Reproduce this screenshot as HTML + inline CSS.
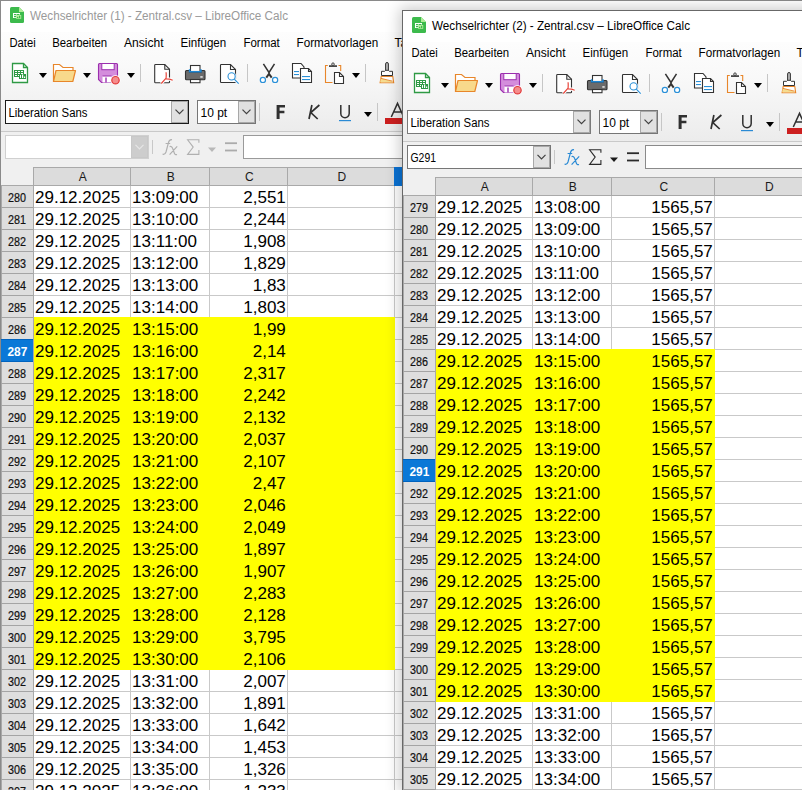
<!DOCTYPE html>
<html><head><meta charset="utf-8"><style>
html,body{margin:0;padding:0;width:802px;height:790px;overflow:hidden;background:#fff}
.w{position:absolute}
#w1{left:0;top:0;width:820px;height:800px}
#w2{left:402px;top:10px;width:460px;height:782px;box-shadow:0 0 14px 2px rgba(0,0,0,0.22)}
svg{display:block}
</style></head><body>
<div class="w" id="w1"><svg width="820" height="800" font-family="Liberation Sans"><rect x="0" y="0" width="820" height="800" fill="#fff"/><defs><linearGradient id="tbg" x1="0" y1="0" x2="0" y2="1"><stop offset="0" stop-color="#fdfdfd"/><stop offset="0.35" stop-color="#f9f9f9"/><stop offset="1" stop-color="#ececec"/></linearGradient></defs><rect x="1" y="32" width="820" height="99" fill="url(#tbg)"/><rect x="1" y="131" width="819" height="1" fill="#c9c9c9"/><rect x="1" y="132" width="820" height="660" fill="#f0f0f0"/><rect x="0" y="0" width="820" height="1" fill="#8a8a8a"/><rect x="0" y="0" width="1" height="800" fill="#8a8a8a"/><path d="M11.5 7h7.5l5 5v9.5a1.5 1.5 0 0 1-1.5 1.5h-11a1.5 1.5 0 0 1-1.5-1.5v-13a1.5 1.5 0 0 1 1.5-1.5z" fill="#3cba4c"/><path d="M19 7l5 5h-5z" fill="#b0ee98"/><rect x="13" y="13" width="7" height="5" fill="#fff"/><rect x="14" y="14" width="2.5" height="1.2" fill="#3cba4c"/><rect x="17" y="14" width="2.5" height="1.2" fill="#3cba4c"/><rect x="14" y="16" width="2.5" height="1.2" fill="#3cba4c"/><rect x="16.2" y="15" width="5" height="3.8" fill="#b6ee9e"/><rect x="17" y="16.8" width="1.3" height="1.3" fill="#3cba4c"/><rect x="19" y="15.8" width="1.3" height="2.3" fill="#3cba4c"/><text x="30" y="20" font-size="12" fill="#9a9a9a" textLength="258" lengthAdjust="spacingAndGlyphs">Wechselrichter (1) - Zentral.csv – LibreOffice Calc</text><text x="9.5" y="47" font-size="12" fill="#000" textLength="26.2" lengthAdjust="spacingAndGlyphs">Datei</text><text x="52.2" y="47" font-size="12" fill="#000" textLength="55" lengthAdjust="spacingAndGlyphs">Bearbeiten</text><text x="124" y="47" font-size="12" fill="#000" textLength="39.6" lengthAdjust="spacingAndGlyphs">Ansicht</text><text x="180.6" y="47" font-size="12" fill="#000" textLength="45.6" lengthAdjust="spacingAndGlyphs">Einfügen</text><text x="243.4" y="47" font-size="12" fill="#000" textLength="36.4" lengthAdjust="spacingAndGlyphs">Format</text><text x="296.5" y="47" font-size="12" fill="#000" textLength="81.8" lengthAdjust="spacingAndGlyphs">Formatvorlagen</text><text x="394.5" y="47" font-size="12" fill="#000" textLength="38" lengthAdjust="spacingAndGlyphs">Tabelle</text><path d="M12.5 63.5h11l4 4v15h-15z" fill="#fff" stroke="#2f9a45" stroke-width="1.3"/><path d="M23.5 63.5v4h4" fill="none" stroke="#2f9a45" stroke-width="1.3"/><rect x="14" y="70" width="10" height="7" fill="#2f9a45"/><rect x="15" y="71" width="2" height="1" fill="#fff"/><rect x="15" y="73" width="2" height="1" fill="#fff"/><rect x="15" y="75" width="2" height="1" fill="#fff"/><rect x="18" y="71" width="2" height="1" fill="#fff"/><rect x="18" y="73" width="2" height="1" fill="#fff"/><rect x="18" y="75" width="2" height="1" fill="#fff"/><rect x="21" y="71" width="2" height="1" fill="#fff"/><rect x="21" y="73" width="2" height="1" fill="#fff"/><rect x="21" y="75" width="2" height="1" fill="#fff"/><rect x="19" y="74" width="7" height="5" fill="#2f9a45"/><rect x="20" y="75" width="1" height="3" fill="#fff"/><rect x="22" y="74.5" width="1.2" height="3.5" fill="#fff"/><rect x="24" y="76.5" width="1.2" height="1.5" fill="#fff"/><path d="M39 73h8l-4.0 5z" fill="#000"/><path d="M53.5 81.5v-17h6l3.5 3h10v3" fill="#fff" stroke="#e8862a" stroke-width="1.2"/><path d="M56 70.5h19.5l-2.7 11h-19.3z" fill="#f8d98b" stroke="#e8862a" stroke-width="1.2" stroke-linejoin="round"/><path d="M83 73h8l-4.0 5z" fill="#000"/><path d="M99.5 63.5h17a1 1 0 0 1 1 1v18h-16l-3-3v-15a1 1 0 0 1 1-1z" fill="#d48ddc" stroke="#9b2fae" stroke-width="1.1"/><rect x="101.8" y="63.5" width="12.4" height="6.2" fill="#fff" stroke="#9b2fae" stroke-width="1"/><rect x="102.5" y="76" width="9" height="6.5" fill="#fff"/><path d="M102.5 76h9" stroke="#9b2fae" stroke-width="1"/><rect x="105.3" y="77.5" width="1.4" height="5" fill="#9b2fae"/><circle cx="115.5" cy="80.2" r="5" fill="#fff"/><circle cx="115.5" cy="80.2" r="3.7" fill="#f58c8c" stroke="#e03a3a" stroke-width="1.2"/><path d="M127 73h8l-4.0 5z" fill="#000"/><rect x="140" y="64" width="1" height="18" fill="#c6c6c6"/><path d="M155.5 64.5h9.3l4.7 4.7v12.8a.8.8 0 0 1-.8.8h-13.2a.8.8 0 0 1-.8-.8v-16.7a.8.8 0 0 1 .8-.8z" fill="#fff" stroke="#333" stroke-width="1.1"/><path d="M164.8 64.5v4.8h4.7" fill="none" stroke="#333" stroke-width="1.1"/><path d="M166.1 72.2c.2 2 .2 4 0 5.9l-4.8 5.4M165.4 78.9c2.6-.2 5 .3 7.3 1.3M166.1 78.1l-.9 1" fill="none" stroke="#fff" stroke-width="3.2"/><path d="M166.1 72.2c.2 2 .2 4 0 5.9l-4.8 5.4M165.4 78.9c2.6-.2 5 .3 7.3 1.3M166.1 78.1l-.9 1" fill="none" stroke="#e8443a" stroke-width="1.2"/><rect x="190.5" y="65.5" width="9.5" height="6" fill="#fff" stroke="#333" stroke-width="1.1"/><path d="M186.5 70.5h3v1.8h11.5v-1.8h3a1 1 0 0 1 1 1v7.2a1 1 0 0 1-1 1h-17.5a1 1 0 0 1-1-1v-7.2a1 1 0 0 1 1-1z" fill="#6b6b6b" stroke="#333" stroke-width="1.1"/><path d="M189.6 69.3v2.4h11.3v-2.4" fill="none" stroke="#1e88d6" stroke-width="1.6"/><rect x="190.5" y="79.5" width="9.5" height="3.2" fill="#fff" stroke="#333" stroke-width="1.1"/><rect x="200.3" y="76.3" width="2.4" height="1.3" fill="#fff"/><path d="M221.3 64.5h9.2l5 5v13h-14.2a.8.8 0 0 1-.8-.8v-16.4a.8.8 0 0 1 .8-.8z" fill="#fff" stroke="#333" stroke-width="1.1"/><path d="M230.5 64.5v5h5" fill="none" stroke="#333" stroke-width="1.1"/><circle cx="231.6" cy="76.4" r="4.6" fill="#fff"/><path d="M234.6 79.4l4.2 4.3" stroke="#fff" stroke-width="3"/><circle cx="231.6" cy="76.4" r="3.6" fill="none" stroke="#2a90d8" stroke-width="1.1"/><path d="M234.3 79.1l4.4 4.5" stroke="#2a90d8" stroke-width="1.2"/><rect x="247" y="64" width="1" height="18" fill="#c6c6c6"/><path d="M263.4 63.9l5.6 8.6l5.5-8.6" fill="none" stroke="#333" stroke-width="1.5"/><path d="M266.3 77.6l2.7-3.6l2.7 3.6" fill="none" stroke="#333" stroke-width="2"/><circle cx="262.9" cy="79.9" r="2.6" fill="#fff" stroke="#2a90d8" stroke-width="1.2"/><circle cx="275.1" cy="79.9" r="2.6" fill="#fff" stroke="#2a90d8" stroke-width="1.2"/><path d="M292.5 63.5h8.5l3 3.5v11h-11.5z" fill="#fff" stroke="#333" stroke-width="1.1"/><rect x="294" y="71" width="5" height="1.1" fill="#2a90d8"/><rect x="294" y="74" width="5" height="1.1" fill="#2a90d8"/><path d="M300.5 68.5h8l3 3v11h-11z" fill="#fff" stroke="#333" stroke-width="1.1"/><path d="M308.5 68.5v3h3" fill="none" stroke="#333" stroke-width="1.1"/><rect x="302" y="76" width="8" height="1.1" fill="#2a90d8"/><rect x="302" y="79" width="8" height="1.1" fill="#2a90d8"/><path d="M327.8 65.5h-2.3v17h7M338.5 65.5h2.2v5.5" fill="none" stroke="#e8862a" stroke-width="1.1"/><rect x="329" y="65.3" width="8" height="1.6" fill="#333"/><circle cx="333" cy="64.2" r="1.3" fill="#eee" stroke="#333" stroke-width="0.9"/><path d="M334.5 72.5h5l4 4v7h-9z" fill="#fff" stroke="#333" stroke-width="1.1"/><path d="M339.5 72.5v4h4" fill="none" stroke="#333" stroke-width="1.1"/><path d="M352 73h8l-4.0 5z" fill="#000"/><rect x="365" y="64" width="1" height="18" fill="#c6c6c6"/><path d="M385.6 70.5v-6.6a1.4 1.4 0 0 1 2.8 0v6.6" fill="#b8b8b8" stroke="#333" stroke-width="1"/><path d="M381.5 75.5v-4.2h3.2l1-1h2.6l1 1h3.2v4.2z" fill="#fff" stroke="#333" stroke-width="1"/><path d="M381.2 76.5h11.6l.9 6.3h-13.6z" fill="#fff" stroke="#e8862a" stroke-width="1.1"/><path d="M380.8 78.3l11.8 3.2v.8h-12.4z" fill="#f5dc90"/><path d="M381 78.4l11.6 2.8" stroke="#e8862a" stroke-width="0.9"/><rect x="5" y="100" width="184" height="24" fill="#1a1a1a"/><rect x="6" y="101" width="182" height="22" fill="#fff"/><rect x="171" y="101" width="17" height="22" fill="#a8a8a8"/><rect x="172" y="102" width="15" height="20" fill="#e1e1e1"/><path d="M175.5 109.6l4 4l4-4" fill="none" stroke="#404040" stroke-width="1.2"/><text x="8.5" y="117" font-size="12" fill="#000" textLength="79" lengthAdjust="spacingAndGlyphs">Liberation Sans</text><rect x="197" y="100" width="59" height="24" fill="#767676"/><rect x="198" y="101" width="57" height="22" fill="#fff"/><rect x="238" y="101" width="17" height="22" fill="#a8a8a8"/><rect x="239" y="102" width="15" height="20" fill="#e1e1e1"/><path d="M242.5 109.6l4 4l4-4" fill="none" stroke="#404040" stroke-width="1.2"/><text x="200.5" y="117" font-size="12" fill="#000">10 pt</text><rect x="259" y="103" width="1" height="18" fill="#c6c6c6"/><path d="M276.6 105h8.4v2.5h-5.4v3.3h4.8v2.4h-4.8v5.8h-3z" fill="#303030"/><path d="M311.9 105l-2.9 14M319.4 105l-8.6 7.6l6.9 6.4" fill="none" stroke="#303030" stroke-width="1.7"/><path d="M340.8 105v8.5a4.2 4.2 0 0 0 8.4 0v-8.5" fill="none" stroke="#303030" stroke-width="1.5"/><rect x="339" y="120" width="12" height="1.2" fill="#2a8ad4"/><path d="M364 112h8l-4.0 5z" fill="#000"/><rect x="377" y="103" width="1" height="18" fill="#c6c6c6"/><path d="M391.3 117l6.2-13.6l6.2 13.6M393.6 112h7.8" fill="none" stroke="#303030" stroke-width="1.5"/><rect x="385" y="118" width="40" height="6" fill="#cc1f1f"/><rect x="5" y="135" width="144" height="24" fill="#d0d0d0"/><rect x="6" y="136" width="142" height="22" fill="#fff"/><rect x="131" y="136" width="17" height="22" fill="#c8c8c8"/><rect x="132" y="137" width="15" height="20" fill="#cdcdcd"/><path d="M135.5 144.8l4 4l4-4" fill="none" stroke="#e6e6e6" stroke-width="1.2"/><rect x="152" y="140" width="1" height="14" fill="#c8c8c8"/><path d="M162.6 154.2c1.6.4 2.8-.3 3.4-2.2l2.4-9.2c.6-2.3 1.8-3.4 3.6-3M165.6 143.5h4.6" fill="none" stroke="#b0b0b0" stroke-width="1.2"/><path d="M169.6 146.6c1.6-.6 2.4.2 3 1.8l1.8 4.8c.5 1.4 1.3 1.8 2.6 1.3M177.2 146.4l-7.6 8.3" fill="none" stroke="#b0b0b0" stroke-width="1.2"/><path d="M198.9 142.8v-3h-11.3l5.6 7.3l-5.6 7.3h11.3v-4.3" fill="none" stroke="#b0b0b0" stroke-width="1.1"/><path d="M208 147.5h8l-4.0 4.5z" fill="#b8b8b8"/><rect x="225" y="142.3" width="12" height="1.8" fill="#ababab"/><rect x="225" y="149.6" width="12" height="1.8" fill="#ababab"/><rect x="243" y="135" width="600" height="24" fill="#9a9a9a"/><rect x="244" y="136" width="600" height="22" fill="#fff"/><rect x="34" y="168" width="830" height="17" fill="#dcdcdc"/><rect x="33" y="167" width="797" height="1" fill="#a9a9a9"/><rect x="1" y="185" width="829" height="1" fill="#a9a9a9"/><text x="82.8" y="181" font-size="12" fill="#1a1a1a" text-anchor="middle">A</text><rect x="130" y="168" width="1" height="17" fill="#a9a9a9"/><text x="170.8" y="181" font-size="12" fill="#1a1a1a" text-anchor="middle">B</text><rect x="209" y="168" width="1" height="17" fill="#a9a9a9"/><text x="249.3" y="181" font-size="12" fill="#1a1a1a" text-anchor="middle">C</text><rect x="287" y="168" width="1" height="17" fill="#a9a9a9"/><text x="341.8" y="181" font-size="12" fill="#1a1a1a" text-anchor="middle">D</text><rect x="394" y="168" width="1" height="17" fill="#a9a9a9"/><text x="449.3" y="181" font-size="12" fill="#1a1a1a" text-anchor="middle">E</text><rect x="502" y="168" width="1" height="17" fill="#a9a9a9"/><rect x="394" y="167" width="108" height="19" fill="#0a72d4"/><rect x="33" y="167" width="1" height="633" fill="#a9a9a9"/><rect x="1" y="186" width="1" height="614" fill="#a8a8a8"/><rect x="2" y="186" width="31" height="21" fill="#dedede"/><rect x="1" y="207" width="32" height="1" fill="#a4a4a4"/><text x="17" y="202" font-size="12" fill="#111" text-anchor="middle" textLength="18" lengthAdjust="spacingAndGlyphs" stroke="#111" stroke-width="0.2">280</text><rect x="2" y="208" width="31" height="21" fill="#dedede"/><rect x="1" y="229" width="32" height="1" fill="#a4a4a4"/><text x="17" y="224" font-size="12" fill="#111" text-anchor="middle" textLength="18" lengthAdjust="spacingAndGlyphs" stroke="#111" stroke-width="0.2">281</text><rect x="2" y="230" width="31" height="21" fill="#dedede"/><rect x="1" y="251" width="32" height="1" fill="#a4a4a4"/><text x="17" y="246" font-size="12" fill="#111" text-anchor="middle" textLength="18" lengthAdjust="spacingAndGlyphs" stroke="#111" stroke-width="0.2">282</text><rect x="2" y="252" width="31" height="21" fill="#dedede"/><rect x="1" y="273" width="32" height="1" fill="#a4a4a4"/><text x="17" y="268" font-size="12" fill="#111" text-anchor="middle" textLength="18" lengthAdjust="spacingAndGlyphs" stroke="#111" stroke-width="0.2">283</text><rect x="2" y="274" width="31" height="21" fill="#dedede"/><rect x="1" y="295" width="32" height="1" fill="#a4a4a4"/><text x="17" y="290" font-size="12" fill="#111" text-anchor="middle" textLength="18" lengthAdjust="spacingAndGlyphs" stroke="#111" stroke-width="0.2">284</text><rect x="2" y="296" width="31" height="21" fill="#dedede"/><rect x="1" y="317" width="32" height="1" fill="#a4a4a4"/><text x="17" y="312" font-size="12" fill="#111" text-anchor="middle" textLength="18" lengthAdjust="spacingAndGlyphs" stroke="#111" stroke-width="0.2">285</text><rect x="2" y="318" width="31" height="21" fill="#dedede"/><rect x="1" y="339" width="32" height="1" fill="#a4a4a4"/><text x="17" y="334" font-size="12" fill="#111" text-anchor="middle" textLength="18" lengthAdjust="spacingAndGlyphs" stroke="#111" stroke-width="0.2">286</text><rect x="1" y="339" width="32" height="23" fill="#0063be"/><rect x="1" y="340" width="32" height="21" fill="#0a78d7"/><text x="17.4" y="356" font-size="12" fill="#fff" text-anchor="middle" textLength="19.8" lengthAdjust="spacingAndGlyphs" font-weight="bold">287</text><rect x="2" y="362" width="31" height="21" fill="#dedede"/><rect x="1" y="383" width="32" height="1" fill="#a4a4a4"/><text x="17" y="378" font-size="12" fill="#111" text-anchor="middle" textLength="18" lengthAdjust="spacingAndGlyphs" stroke="#111" stroke-width="0.2">288</text><rect x="2" y="384" width="31" height="21" fill="#dedede"/><rect x="1" y="405" width="32" height="1" fill="#a4a4a4"/><text x="17" y="400" font-size="12" fill="#111" text-anchor="middle" textLength="18" lengthAdjust="spacingAndGlyphs" stroke="#111" stroke-width="0.2">289</text><rect x="2" y="406" width="31" height="21" fill="#dedede"/><rect x="1" y="427" width="32" height="1" fill="#a4a4a4"/><text x="17" y="422" font-size="12" fill="#111" text-anchor="middle" textLength="18" lengthAdjust="spacingAndGlyphs" stroke="#111" stroke-width="0.2">290</text><rect x="2" y="428" width="31" height="21" fill="#dedede"/><rect x="1" y="449" width="32" height="1" fill="#a4a4a4"/><text x="17" y="444" font-size="12" fill="#111" text-anchor="middle" textLength="18" lengthAdjust="spacingAndGlyphs" stroke="#111" stroke-width="0.2">291</text><rect x="2" y="450" width="31" height="21" fill="#dedede"/><rect x="1" y="471" width="32" height="1" fill="#a4a4a4"/><text x="17" y="466" font-size="12" fill="#111" text-anchor="middle" textLength="18" lengthAdjust="spacingAndGlyphs" stroke="#111" stroke-width="0.2">292</text><rect x="2" y="472" width="31" height="21" fill="#dedede"/><rect x="1" y="493" width="32" height="1" fill="#a4a4a4"/><text x="17" y="488" font-size="12" fill="#111" text-anchor="middle" textLength="18" lengthAdjust="spacingAndGlyphs" stroke="#111" stroke-width="0.2">293</text><rect x="2" y="494" width="31" height="21" fill="#dedede"/><rect x="1" y="515" width="32" height="1" fill="#a4a4a4"/><text x="17" y="510" font-size="12" fill="#111" text-anchor="middle" textLength="18" lengthAdjust="spacingAndGlyphs" stroke="#111" stroke-width="0.2">294</text><rect x="2" y="516" width="31" height="21" fill="#dedede"/><rect x="1" y="537" width="32" height="1" fill="#a4a4a4"/><text x="17" y="532" font-size="12" fill="#111" text-anchor="middle" textLength="18" lengthAdjust="spacingAndGlyphs" stroke="#111" stroke-width="0.2">295</text><rect x="2" y="538" width="31" height="21" fill="#dedede"/><rect x="1" y="559" width="32" height="1" fill="#a4a4a4"/><text x="17" y="554" font-size="12" fill="#111" text-anchor="middle" textLength="18" lengthAdjust="spacingAndGlyphs" stroke="#111" stroke-width="0.2">296</text><rect x="2" y="560" width="31" height="21" fill="#dedede"/><rect x="1" y="581" width="32" height="1" fill="#a4a4a4"/><text x="17" y="576" font-size="12" fill="#111" text-anchor="middle" textLength="18" lengthAdjust="spacingAndGlyphs" stroke="#111" stroke-width="0.2">297</text><rect x="2" y="582" width="31" height="21" fill="#dedede"/><rect x="1" y="603" width="32" height="1" fill="#a4a4a4"/><text x="17" y="598" font-size="12" fill="#111" text-anchor="middle" textLength="18" lengthAdjust="spacingAndGlyphs" stroke="#111" stroke-width="0.2">298</text><rect x="2" y="604" width="31" height="21" fill="#dedede"/><rect x="1" y="625" width="32" height="1" fill="#a4a4a4"/><text x="17" y="620" font-size="12" fill="#111" text-anchor="middle" textLength="18" lengthAdjust="spacingAndGlyphs" stroke="#111" stroke-width="0.2">299</text><rect x="2" y="626" width="31" height="21" fill="#dedede"/><rect x="1" y="647" width="32" height="1" fill="#a4a4a4"/><text x="17" y="642" font-size="12" fill="#111" text-anchor="middle" textLength="18" lengthAdjust="spacingAndGlyphs" stroke="#111" stroke-width="0.2">300</text><rect x="2" y="648" width="31" height="21" fill="#dedede"/><rect x="1" y="669" width="32" height="1" fill="#a4a4a4"/><text x="17" y="664" font-size="12" fill="#111" text-anchor="middle" textLength="18" lengthAdjust="spacingAndGlyphs" stroke="#111" stroke-width="0.2">301</text><rect x="2" y="670" width="31" height="21" fill="#dedede"/><rect x="1" y="691" width="32" height="1" fill="#a4a4a4"/><text x="17" y="686" font-size="12" fill="#111" text-anchor="middle" textLength="18" lengthAdjust="spacingAndGlyphs" stroke="#111" stroke-width="0.2">302</text><rect x="2" y="692" width="31" height="21" fill="#dedede"/><rect x="1" y="713" width="32" height="1" fill="#a4a4a4"/><text x="17" y="708" font-size="12" fill="#111" text-anchor="middle" textLength="18" lengthAdjust="spacingAndGlyphs" stroke="#111" stroke-width="0.2">303</text><rect x="2" y="714" width="31" height="21" fill="#dedede"/><rect x="1" y="735" width="32" height="1" fill="#a4a4a4"/><text x="17" y="730" font-size="12" fill="#111" text-anchor="middle" textLength="18" lengthAdjust="spacingAndGlyphs" stroke="#111" stroke-width="0.2">304</text><rect x="2" y="736" width="31" height="21" fill="#dedede"/><rect x="1" y="757" width="32" height="1" fill="#a4a4a4"/><text x="17" y="752" font-size="12" fill="#111" text-anchor="middle" textLength="18" lengthAdjust="spacingAndGlyphs" stroke="#111" stroke-width="0.2">305</text><rect x="2" y="758" width="31" height="21" fill="#dedede"/><rect x="1" y="779" width="32" height="1" fill="#a4a4a4"/><text x="17" y="774" font-size="12" fill="#111" text-anchor="middle" textLength="18" lengthAdjust="spacingAndGlyphs" stroke="#111" stroke-width="0.2">306</text><rect x="2" y="780" width="31" height="21" fill="#dedede"/><rect x="1" y="801" width="32" height="1" fill="#a4a4a4"/><text x="17" y="796" font-size="12" fill="#111" text-anchor="middle" textLength="18" lengthAdjust="spacingAndGlyphs" stroke="#111" stroke-width="0.2">307</text><rect x="34" y="186" width="830" height="800" fill="#fff"/><rect x="34" y="207" width="796" height="1" fill="#c9c9c9"/><rect x="34" y="229" width="796" height="1" fill="#c9c9c9"/><rect x="34" y="251" width="796" height="1" fill="#c9c9c9"/><rect x="34" y="273" width="796" height="1" fill="#c9c9c9"/><rect x="34" y="295" width="796" height="1" fill="#c9c9c9"/><rect x="34" y="317" width="796" height="1" fill="#c9c9c9"/><rect x="34" y="339" width="796" height="1" fill="#c9c9c9"/><rect x="34" y="361" width="796" height="1" fill="#c9c9c9"/><rect x="34" y="383" width="796" height="1" fill="#c9c9c9"/><rect x="34" y="405" width="796" height="1" fill="#c9c9c9"/><rect x="34" y="427" width="796" height="1" fill="#c9c9c9"/><rect x="34" y="449" width="796" height="1" fill="#c9c9c9"/><rect x="34" y="471" width="796" height="1" fill="#c9c9c9"/><rect x="34" y="493" width="796" height="1" fill="#c9c9c9"/><rect x="34" y="515" width="796" height="1" fill="#c9c9c9"/><rect x="34" y="537" width="796" height="1" fill="#c9c9c9"/><rect x="34" y="559" width="796" height="1" fill="#c9c9c9"/><rect x="34" y="581" width="796" height="1" fill="#c9c9c9"/><rect x="34" y="603" width="796" height="1" fill="#c9c9c9"/><rect x="34" y="625" width="796" height="1" fill="#c9c9c9"/><rect x="34" y="647" width="796" height="1" fill="#c9c9c9"/><rect x="34" y="669" width="796" height="1" fill="#c9c9c9"/><rect x="34" y="691" width="796" height="1" fill="#c9c9c9"/><rect x="34" y="713" width="796" height="1" fill="#c9c9c9"/><rect x="34" y="735" width="796" height="1" fill="#c9c9c9"/><rect x="34" y="757" width="796" height="1" fill="#c9c9c9"/><rect x="34" y="779" width="796" height="1" fill="#c9c9c9"/><rect x="34" y="801" width="796" height="1" fill="#c9c9c9"/><rect x="130" y="186" width="1" height="614" fill="#c9c9c9"/><rect x="209" y="186" width="1" height="614" fill="#c9c9c9"/><rect x="287" y="186" width="1" height="614" fill="#c9c9c9"/><rect x="394" y="186" width="1" height="614" fill="#c9c9c9"/><rect x="502" y="186" width="1" height="614" fill="#c9c9c9"/><rect x="34" y="317" width="361" height="353" fill="#ffff00"/><text x="35.0" y="203" font-size="17" fill="#000">29.12.2025</text><text x="132.1" y="203" font-size="17" fill="#000">13:09:00</text><text x="285.8" y="203" font-size="17" fill="#000" text-anchor="end">2,551</text><text x="35.0" y="225" font-size="17" fill="#000">29.12.2025</text><text x="132.1" y="225" font-size="17" fill="#000">13:10:00</text><text x="285.8" y="225" font-size="17" fill="#000" text-anchor="end">2,244</text><text x="35.0" y="247" font-size="17" fill="#000">29.12.2025</text><text x="132.1" y="247" font-size="17" fill="#000">13:11:00</text><text x="285.8" y="247" font-size="17" fill="#000" text-anchor="end">1,908</text><text x="35.0" y="269" font-size="17" fill="#000">29.12.2025</text><text x="132.1" y="269" font-size="17" fill="#000">13:12:00</text><text x="285.8" y="269" font-size="17" fill="#000" text-anchor="end">1,829</text><text x="35.0" y="291" font-size="17" fill="#000">29.12.2025</text><text x="132.1" y="291" font-size="17" fill="#000">13:13:00</text><text x="285.8" y="291" font-size="17" fill="#000" text-anchor="end">1,83</text><text x="35.0" y="313" font-size="17" fill="#000">29.12.2025</text><text x="132.1" y="313" font-size="17" fill="#000">13:14:00</text><text x="285.8" y="313" font-size="17" fill="#000" text-anchor="end">1,803</text><text x="35.0" y="335" font-size="17" fill="#000">29.12.2025</text><text x="132.1" y="335" font-size="17" fill="#000">13:15:00</text><text x="285.8" y="335" font-size="17" fill="#000" text-anchor="end">1,99</text><text x="35.0" y="357" font-size="17" fill="#000">29.12.2025</text><text x="132.1" y="357" font-size="17" fill="#000">13:16:00</text><text x="285.8" y="357" font-size="17" fill="#000" text-anchor="end">2,14</text><text x="35.0" y="379" font-size="17" fill="#000">29.12.2025</text><text x="132.1" y="379" font-size="17" fill="#000">13:17:00</text><text x="285.8" y="379" font-size="17" fill="#000" text-anchor="end">2,317</text><text x="35.0" y="401" font-size="17" fill="#000">29.12.2025</text><text x="132.1" y="401" font-size="17" fill="#000">13:18:00</text><text x="285.8" y="401" font-size="17" fill="#000" text-anchor="end">2,242</text><text x="35.0" y="423" font-size="17" fill="#000">29.12.2025</text><text x="132.1" y="423" font-size="17" fill="#000">13:19:00</text><text x="285.8" y="423" font-size="17" fill="#000" text-anchor="end">2,132</text><text x="35.0" y="445" font-size="17" fill="#000">29.12.2025</text><text x="132.1" y="445" font-size="17" fill="#000">13:20:00</text><text x="285.8" y="445" font-size="17" fill="#000" text-anchor="end">2,037</text><text x="35.0" y="467" font-size="17" fill="#000">29.12.2025</text><text x="132.1" y="467" font-size="17" fill="#000">13:21:00</text><text x="285.8" y="467" font-size="17" fill="#000" text-anchor="end">2,107</text><text x="35.0" y="489" font-size="17" fill="#000">29.12.2025</text><text x="132.1" y="489" font-size="17" fill="#000">13:22:00</text><text x="285.8" y="489" font-size="17" fill="#000" text-anchor="end">2,47</text><text x="35.0" y="511" font-size="17" fill="#000">29.12.2025</text><text x="132.1" y="511" font-size="17" fill="#000">13:23:00</text><text x="285.8" y="511" font-size="17" fill="#000" text-anchor="end">2,046</text><text x="35.0" y="533" font-size="17" fill="#000">29.12.2025</text><text x="132.1" y="533" font-size="17" fill="#000">13:24:00</text><text x="285.8" y="533" font-size="17" fill="#000" text-anchor="end">2,049</text><text x="35.0" y="555" font-size="17" fill="#000">29.12.2025</text><text x="132.1" y="555" font-size="17" fill="#000">13:25:00</text><text x="285.8" y="555" font-size="17" fill="#000" text-anchor="end">1,897</text><text x="35.0" y="577" font-size="17" fill="#000">29.12.2025</text><text x="132.1" y="577" font-size="17" fill="#000">13:26:00</text><text x="285.8" y="577" font-size="17" fill="#000" text-anchor="end">1,907</text><text x="35.0" y="599" font-size="17" fill="#000">29.12.2025</text><text x="132.1" y="599" font-size="17" fill="#000">13:27:00</text><text x="285.8" y="599" font-size="17" fill="#000" text-anchor="end">2,283</text><text x="35.0" y="621" font-size="17" fill="#000">29.12.2025</text><text x="132.1" y="621" font-size="17" fill="#000">13:28:00</text><text x="285.8" y="621" font-size="17" fill="#000" text-anchor="end">2,128</text><text x="35.0" y="643" font-size="17" fill="#000">29.12.2025</text><text x="132.1" y="643" font-size="17" fill="#000">13:29:00</text><text x="285.8" y="643" font-size="17" fill="#000" text-anchor="end">3,795</text><text x="35.0" y="665" font-size="17" fill="#000">29.12.2025</text><text x="132.1" y="665" font-size="17" fill="#000">13:30:00</text><text x="285.8" y="665" font-size="17" fill="#000" text-anchor="end">2,106</text><text x="35.0" y="687" font-size="17" fill="#000">29.12.2025</text><text x="132.1" y="687" font-size="17" fill="#000">13:31:00</text><text x="285.8" y="687" font-size="17" fill="#000" text-anchor="end">2,007</text><text x="35.0" y="709" font-size="17" fill="#000">29.12.2025</text><text x="132.1" y="709" font-size="17" fill="#000">13:32:00</text><text x="285.8" y="709" font-size="17" fill="#000" text-anchor="end">1,891</text><text x="35.0" y="731" font-size="17" fill="#000">29.12.2025</text><text x="132.1" y="731" font-size="17" fill="#000">13:33:00</text><text x="285.8" y="731" font-size="17" fill="#000" text-anchor="end">1,642</text><text x="35.0" y="753" font-size="17" fill="#000">29.12.2025</text><text x="132.1" y="753" font-size="17" fill="#000">13:34:00</text><text x="285.8" y="753" font-size="17" fill="#000" text-anchor="end">1,453</text><text x="35.0" y="775" font-size="17" fill="#000">29.12.2025</text><text x="132.1" y="775" font-size="17" fill="#000">13:35:00</text><text x="285.8" y="775" font-size="17" fill="#000" text-anchor="end">1,326</text><text x="35.0" y="797" font-size="17" fill="#000">29.12.2025</text><text x="132.1" y="797" font-size="17" fill="#000">13:36:00</text><text x="285.8" y="797" font-size="17" fill="#000" text-anchor="end">1,233</text></svg></div>
<div class="w" id="w2"><svg width="460" height="782" font-family="Liberation Sans"><rect x="0" y="0" width="460" height="782" fill="#fff"/><defs><linearGradient id="tbg" x1="0" y1="0" x2="0" y2="1"><stop offset="0" stop-color="#fdfdfd"/><stop offset="0.35" stop-color="#f9f9f9"/><stop offset="1" stop-color="#ececec"/></linearGradient></defs><rect x="1" y="32" width="460" height="99" fill="url(#tbg)"/><rect x="1" y="131" width="459" height="1" fill="#c9c9c9"/><rect x="1" y="132" width="460" height="660" fill="#f0f0f0"/><rect x="0" y="0" width="460" height="1" fill="#686868"/><rect x="0" y="0" width="1" height="782" fill="#686868"/><path d="M11.5 7h7.5l5 5v9.5a1.5 1.5 0 0 1-1.5 1.5h-11a1.5 1.5 0 0 1-1.5-1.5v-13a1.5 1.5 0 0 1 1.5-1.5z" fill="#3cba4c"/><path d="M19 7l5 5h-5z" fill="#b0ee98"/><rect x="13" y="13" width="7" height="5" fill="#fff"/><rect x="14" y="14" width="2.5" height="1.2" fill="#3cba4c"/><rect x="17" y="14" width="2.5" height="1.2" fill="#3cba4c"/><rect x="14" y="16" width="2.5" height="1.2" fill="#3cba4c"/><rect x="16.2" y="15" width="5" height="3.8" fill="#b6ee9e"/><rect x="17" y="16.8" width="1.3" height="1.3" fill="#3cba4c"/><rect x="19" y="15.8" width="1.3" height="2.3" fill="#3cba4c"/><text x="30" y="20" font-size="12" fill="#000" textLength="258" lengthAdjust="spacingAndGlyphs">Wechselrichter (2) - Zentral.csv – LibreOffice Calc</text><text x="9.5" y="47" font-size="12" fill="#000" textLength="26.2" lengthAdjust="spacingAndGlyphs">Datei</text><text x="52.2" y="47" font-size="12" fill="#000" textLength="55" lengthAdjust="spacingAndGlyphs">Bearbeiten</text><text x="124" y="47" font-size="12" fill="#000" textLength="39.6" lengthAdjust="spacingAndGlyphs">Ansicht</text><text x="180.6" y="47" font-size="12" fill="#000" textLength="45.6" lengthAdjust="spacingAndGlyphs">Einfügen</text><text x="243.4" y="47" font-size="12" fill="#000" textLength="36.4" lengthAdjust="spacingAndGlyphs">Format</text><text x="296.5" y="47" font-size="12" fill="#000" textLength="81.8" lengthAdjust="spacingAndGlyphs">Formatvorlagen</text><text x="394.5" y="47" font-size="12" fill="#000" textLength="38" lengthAdjust="spacingAndGlyphs">Tabelle</text><path d="M12.5 63.5h11l4 4v15h-15z" fill="#fff" stroke="#2f9a45" stroke-width="1.3"/><path d="M23.5 63.5v4h4" fill="none" stroke="#2f9a45" stroke-width="1.3"/><rect x="14" y="70" width="10" height="7" fill="#2f9a45"/><rect x="15" y="71" width="2" height="1" fill="#fff"/><rect x="15" y="73" width="2" height="1" fill="#fff"/><rect x="15" y="75" width="2" height="1" fill="#fff"/><rect x="18" y="71" width="2" height="1" fill="#fff"/><rect x="18" y="73" width="2" height="1" fill="#fff"/><rect x="18" y="75" width="2" height="1" fill="#fff"/><rect x="21" y="71" width="2" height="1" fill="#fff"/><rect x="21" y="73" width="2" height="1" fill="#fff"/><rect x="21" y="75" width="2" height="1" fill="#fff"/><rect x="19" y="74" width="7" height="5" fill="#2f9a45"/><rect x="20" y="75" width="1" height="3" fill="#fff"/><rect x="22" y="74.5" width="1.2" height="3.5" fill="#fff"/><rect x="24" y="76.5" width="1.2" height="1.5" fill="#fff"/><path d="M39 73h8l-4.0 5z" fill="#000"/><path d="M53.5 81.5v-17h6l3.5 3h10v3" fill="#fff" stroke="#e8862a" stroke-width="1.2"/><path d="M56 70.5h19.5l-2.7 11h-19.3z" fill="#f8d98b" stroke="#e8862a" stroke-width="1.2" stroke-linejoin="round"/><path d="M83 73h8l-4.0 5z" fill="#000"/><path d="M99.5 63.5h17a1 1 0 0 1 1 1v18h-16l-3-3v-15a1 1 0 0 1 1-1z" fill="#d48ddc" stroke="#9b2fae" stroke-width="1.1"/><rect x="101.8" y="63.5" width="12.4" height="6.2" fill="#fff" stroke="#9b2fae" stroke-width="1"/><rect x="102.5" y="76" width="9" height="6.5" fill="#fff"/><path d="M102.5 76h9" stroke="#9b2fae" stroke-width="1"/><rect x="105.3" y="77.5" width="1.4" height="5" fill="#9b2fae"/><circle cx="115.5" cy="80.2" r="5" fill="#fff"/><circle cx="115.5" cy="80.2" r="3.7" fill="#f58c8c" stroke="#e03a3a" stroke-width="1.2"/><path d="M127 73h8l-4.0 5z" fill="#000"/><rect x="140" y="64" width="1" height="18" fill="#c6c6c6"/><path d="M155.5 64.5h9.3l4.7 4.7v12.8a.8.8 0 0 1-.8.8h-13.2a.8.8 0 0 1-.8-.8v-16.7a.8.8 0 0 1 .8-.8z" fill="#fff" stroke="#333" stroke-width="1.1"/><path d="M164.8 64.5v4.8h4.7" fill="none" stroke="#333" stroke-width="1.1"/><path d="M166.1 72.2c.2 2 .2 4 0 5.9l-4.8 5.4M165.4 78.9c2.6-.2 5 .3 7.3 1.3M166.1 78.1l-.9 1" fill="none" stroke="#fff" stroke-width="3.2"/><path d="M166.1 72.2c.2 2 .2 4 0 5.9l-4.8 5.4M165.4 78.9c2.6-.2 5 .3 7.3 1.3M166.1 78.1l-.9 1" fill="none" stroke="#e8443a" stroke-width="1.2"/><rect x="190.5" y="65.5" width="9.5" height="6" fill="#fff" stroke="#333" stroke-width="1.1"/><path d="M186.5 70.5h3v1.8h11.5v-1.8h3a1 1 0 0 1 1 1v7.2a1 1 0 0 1-1 1h-17.5a1 1 0 0 1-1-1v-7.2a1 1 0 0 1 1-1z" fill="#6b6b6b" stroke="#333" stroke-width="1.1"/><path d="M189.6 69.3v2.4h11.3v-2.4" fill="none" stroke="#1e88d6" stroke-width="1.6"/><rect x="190.5" y="79.5" width="9.5" height="3.2" fill="#fff" stroke="#333" stroke-width="1.1"/><rect x="200.3" y="76.3" width="2.4" height="1.3" fill="#fff"/><path d="M221.3 64.5h9.2l5 5v13h-14.2a.8.8 0 0 1-.8-.8v-16.4a.8.8 0 0 1 .8-.8z" fill="#fff" stroke="#333" stroke-width="1.1"/><path d="M230.5 64.5v5h5" fill="none" stroke="#333" stroke-width="1.1"/><circle cx="231.6" cy="76.4" r="4.6" fill="#fff"/><path d="M234.6 79.4l4.2 4.3" stroke="#fff" stroke-width="3"/><circle cx="231.6" cy="76.4" r="3.6" fill="none" stroke="#2a90d8" stroke-width="1.1"/><path d="M234.3 79.1l4.4 4.5" stroke="#2a90d8" stroke-width="1.2"/><rect x="247" y="64" width="1" height="18" fill="#c6c6c6"/><path d="M263.4 63.9l5.6 8.6l5.5-8.6" fill="none" stroke="#333" stroke-width="1.5"/><path d="M266.3 77.6l2.7-3.6l2.7 3.6" fill="none" stroke="#333" stroke-width="2"/><circle cx="262.9" cy="79.9" r="2.6" fill="#fff" stroke="#2a90d8" stroke-width="1.2"/><circle cx="275.1" cy="79.9" r="2.6" fill="#fff" stroke="#2a90d8" stroke-width="1.2"/><path d="M292.5 63.5h8.5l3 3.5v11h-11.5z" fill="#fff" stroke="#333" stroke-width="1.1"/><rect x="294" y="71" width="5" height="1.1" fill="#2a90d8"/><rect x="294" y="74" width="5" height="1.1" fill="#2a90d8"/><path d="M300.5 68.5h8l3 3v11h-11z" fill="#fff" stroke="#333" stroke-width="1.1"/><path d="M308.5 68.5v3h3" fill="none" stroke="#333" stroke-width="1.1"/><rect x="302" y="76" width="8" height="1.1" fill="#2a90d8"/><rect x="302" y="79" width="8" height="1.1" fill="#2a90d8"/><path d="M327.8 65.5h-2.3v17h7M338.5 65.5h2.2v5.5" fill="none" stroke="#e8862a" stroke-width="1.1"/><rect x="329" y="65.3" width="8" height="1.6" fill="#333"/><circle cx="333" cy="64.2" r="1.3" fill="#eee" stroke="#333" stroke-width="0.9"/><path d="M334.5 72.5h5l4 4v7h-9z" fill="#fff" stroke="#333" stroke-width="1.1"/><path d="M339.5 72.5v4h4" fill="none" stroke="#333" stroke-width="1.1"/><path d="M352 73h8l-4.0 5z" fill="#000"/><rect x="365" y="64" width="1" height="18" fill="#c6c6c6"/><path d="M385.6 70.5v-6.6a1.4 1.4 0 0 1 2.8 0v6.6" fill="#b8b8b8" stroke="#333" stroke-width="1"/><path d="M381.5 75.5v-4.2h3.2l1-1h2.6l1 1h3.2v4.2z" fill="#fff" stroke="#333" stroke-width="1"/><path d="M381.2 76.5h11.6l.9 6.3h-13.6z" fill="#fff" stroke="#e8862a" stroke-width="1.1"/><path d="M380.8 78.3l11.8 3.2v.8h-12.4z" fill="#f5dc90"/><path d="M381 78.4l11.6 2.8" stroke="#e8862a" stroke-width="0.9"/><rect x="5" y="100" width="184" height="24" fill="#7a7a7a"/><rect x="6" y="101" width="182" height="22" fill="#fff"/><rect x="171" y="101" width="17" height="22" fill="#a8a8a8"/><rect x="172" y="102" width="15" height="20" fill="#e1e1e1"/><path d="M175.5 109.6l4 4l4-4" fill="none" stroke="#404040" stroke-width="1.2"/><text x="8.5" y="117" font-size="12" fill="#000" textLength="79" lengthAdjust="spacingAndGlyphs">Liberation Sans</text><rect x="197" y="100" width="59" height="24" fill="#767676"/><rect x="198" y="101" width="57" height="22" fill="#fff"/><rect x="238" y="101" width="17" height="22" fill="#a8a8a8"/><rect x="239" y="102" width="15" height="20" fill="#e1e1e1"/><path d="M242.5 109.6l4 4l4-4" fill="none" stroke="#404040" stroke-width="1.2"/><text x="200.5" y="117" font-size="12" fill="#000">10 pt</text><rect x="259" y="103" width="1" height="18" fill="#c6c6c6"/><path d="M276.6 105h8.4v2.5h-5.4v3.3h4.8v2.4h-4.8v5.8h-3z" fill="#303030"/><path d="M311.9 105l-2.9 14M319.4 105l-8.6 7.6l6.9 6.4" fill="none" stroke="#303030" stroke-width="1.7"/><path d="M340.8 105v8.5a4.2 4.2 0 0 0 8.4 0v-8.5" fill="none" stroke="#303030" stroke-width="1.5"/><rect x="339" y="120" width="12" height="1.2" fill="#2a8ad4"/><path d="M364 112h8l-4.0 5z" fill="#000"/><rect x="377" y="103" width="1" height="18" fill="#c6c6c6"/><path d="M391.3 117l6.2-13.6l6.2 13.6M393.6 112h7.8" fill="none" stroke="#303030" stroke-width="1.5"/><rect x="385" y="118" width="40" height="6" fill="#cc1f1f"/><rect x="5" y="135" width="144" height="24" fill="#767676"/><rect x="6" y="136" width="142" height="22" fill="#fff"/><rect x="131" y="136" width="17" height="22" fill="#a8a8a8"/><rect x="132" y="137" width="15" height="20" fill="#e1e1e1"/><path d="M135.5 144.8l4 4l4-4" fill="none" stroke="#404040" stroke-width="1.2"/><text x="8.5" y="152" font-size="12" fill="#000" textLength="25.5" lengthAdjust="spacingAndGlyphs">G291</text><rect x="152" y="140" width="1" height="14" fill="#c8c8c8"/><path d="M162.6 154.2c1.6.4 2.8-.3 3.4-2.2l2.4-9.2c.6-2.3 1.8-3.4 3.6-3M165.6 143.5h4.6" fill="none" stroke="#2a8ad4" stroke-width="1.2"/><path d="M169.6 146.6c1.6-.6 2.4.2 3 1.8l1.8 4.8c.5 1.4 1.3 1.8 2.6 1.3M177.2 146.4l-7.6 8.3" fill="none" stroke="#2a8ad4" stroke-width="1.2"/><path d="M198.9 142.8v-3h-11.3l5.6 7.3l-5.6 7.3h11.3v-4.3" fill="none" stroke="#2b2b2b" stroke-width="1.1"/><path d="M208 147.5h8l-4.0 4.5z" fill="#1a1a1a"/><rect x="225" y="142.3" width="12" height="1.8" fill="#2b2b2b"/><rect x="225" y="149.6" width="12" height="1.8" fill="#2b2b2b"/><rect x="243" y="135" width="600" height="24" fill="#8a8a8a"/><rect x="244" y="136" width="600" height="22" fill="#fff"/><rect x="34" y="168" width="830" height="17" fill="#dcdcdc"/><rect x="33" y="167" width="797" height="1" fill="#a9a9a9"/><rect x="1" y="185" width="829" height="1" fill="#a9a9a9"/><text x="82.8" y="181" font-size="12" fill="#1a1a1a" text-anchor="middle">A</text><rect x="130" y="168" width="1" height="17" fill="#a9a9a9"/><text x="170.8" y="181" font-size="12" fill="#1a1a1a" text-anchor="middle">B</text><rect x="209" y="168" width="1" height="17" fill="#a9a9a9"/><text x="261.8" y="181" font-size="12" fill="#1a1a1a" text-anchor="middle">C</text><rect x="312" y="168" width="1" height="17" fill="#a9a9a9"/><text x="367.3" y="181" font-size="12" fill="#1a1a1a" text-anchor="middle">D</text><rect x="420" y="168" width="1" height="17" fill="#a9a9a9"/><rect x="33" y="167" width="1" height="633" fill="#a9a9a9"/><rect x="1" y="186" width="1" height="614" fill="#a8a8a8"/><rect x="2" y="186" width="31" height="21" fill="#dedede"/><rect x="1" y="207" width="32" height="1" fill="#a4a4a4"/><text x="17" y="202" font-size="12" fill="#111" text-anchor="middle" textLength="18" lengthAdjust="spacingAndGlyphs" stroke="#111" stroke-width="0.2">279</text><rect x="2" y="208" width="31" height="21" fill="#dedede"/><rect x="1" y="229" width="32" height="1" fill="#a4a4a4"/><text x="17" y="224" font-size="12" fill="#111" text-anchor="middle" textLength="18" lengthAdjust="spacingAndGlyphs" stroke="#111" stroke-width="0.2">280</text><rect x="2" y="230" width="31" height="21" fill="#dedede"/><rect x="1" y="251" width="32" height="1" fill="#a4a4a4"/><text x="17" y="246" font-size="12" fill="#111" text-anchor="middle" textLength="18" lengthAdjust="spacingAndGlyphs" stroke="#111" stroke-width="0.2">281</text><rect x="2" y="252" width="31" height="21" fill="#dedede"/><rect x="1" y="273" width="32" height="1" fill="#a4a4a4"/><text x="17" y="268" font-size="12" fill="#111" text-anchor="middle" textLength="18" lengthAdjust="spacingAndGlyphs" stroke="#111" stroke-width="0.2">282</text><rect x="2" y="274" width="31" height="21" fill="#dedede"/><rect x="1" y="295" width="32" height="1" fill="#a4a4a4"/><text x="17" y="290" font-size="12" fill="#111" text-anchor="middle" textLength="18" lengthAdjust="spacingAndGlyphs" stroke="#111" stroke-width="0.2">283</text><rect x="2" y="296" width="31" height="21" fill="#dedede"/><rect x="1" y="317" width="32" height="1" fill="#a4a4a4"/><text x="17" y="312" font-size="12" fill="#111" text-anchor="middle" textLength="18" lengthAdjust="spacingAndGlyphs" stroke="#111" stroke-width="0.2">284</text><rect x="2" y="318" width="31" height="21" fill="#dedede"/><rect x="1" y="339" width="32" height="1" fill="#a4a4a4"/><text x="17" y="334" font-size="12" fill="#111" text-anchor="middle" textLength="18" lengthAdjust="spacingAndGlyphs" stroke="#111" stroke-width="0.2">285</text><rect x="2" y="340" width="31" height="21" fill="#dedede"/><rect x="1" y="361" width="32" height="1" fill="#a4a4a4"/><text x="17" y="356" font-size="12" fill="#111" text-anchor="middle" textLength="18" lengthAdjust="spacingAndGlyphs" stroke="#111" stroke-width="0.2">286</text><rect x="2" y="362" width="31" height="21" fill="#dedede"/><rect x="1" y="383" width="32" height="1" fill="#a4a4a4"/><text x="17" y="378" font-size="12" fill="#111" text-anchor="middle" textLength="18" lengthAdjust="spacingAndGlyphs" stroke="#111" stroke-width="0.2">287</text><rect x="2" y="384" width="31" height="21" fill="#dedede"/><rect x="1" y="405" width="32" height="1" fill="#a4a4a4"/><text x="17" y="400" font-size="12" fill="#111" text-anchor="middle" textLength="18" lengthAdjust="spacingAndGlyphs" stroke="#111" stroke-width="0.2">288</text><rect x="2" y="406" width="31" height="21" fill="#dedede"/><rect x="1" y="427" width="32" height="1" fill="#a4a4a4"/><text x="17" y="422" font-size="12" fill="#111" text-anchor="middle" textLength="18" lengthAdjust="spacingAndGlyphs" stroke="#111" stroke-width="0.2">289</text><rect x="2" y="428" width="31" height="21" fill="#dedede"/><rect x="1" y="449" width="32" height="1" fill="#a4a4a4"/><text x="17" y="444" font-size="12" fill="#111" text-anchor="middle" textLength="18" lengthAdjust="spacingAndGlyphs" stroke="#111" stroke-width="0.2">290</text><rect x="1" y="449" width="32" height="23" fill="#0063be"/><rect x="1" y="450" width="32" height="21" fill="#0a78d7"/><text x="17.4" y="466" font-size="12" fill="#fff" text-anchor="middle" textLength="19.8" lengthAdjust="spacingAndGlyphs" font-weight="bold">291</text><rect x="2" y="472" width="31" height="21" fill="#dedede"/><rect x="1" y="493" width="32" height="1" fill="#a4a4a4"/><text x="17" y="488" font-size="12" fill="#111" text-anchor="middle" textLength="18" lengthAdjust="spacingAndGlyphs" stroke="#111" stroke-width="0.2">292</text><rect x="2" y="494" width="31" height="21" fill="#dedede"/><rect x="1" y="515" width="32" height="1" fill="#a4a4a4"/><text x="17" y="510" font-size="12" fill="#111" text-anchor="middle" textLength="18" lengthAdjust="spacingAndGlyphs" stroke="#111" stroke-width="0.2">293</text><rect x="2" y="516" width="31" height="21" fill="#dedede"/><rect x="1" y="537" width="32" height="1" fill="#a4a4a4"/><text x="17" y="532" font-size="12" fill="#111" text-anchor="middle" textLength="18" lengthAdjust="spacingAndGlyphs" stroke="#111" stroke-width="0.2">294</text><rect x="2" y="538" width="31" height="21" fill="#dedede"/><rect x="1" y="559" width="32" height="1" fill="#a4a4a4"/><text x="17" y="554" font-size="12" fill="#111" text-anchor="middle" textLength="18" lengthAdjust="spacingAndGlyphs" stroke="#111" stroke-width="0.2">295</text><rect x="2" y="560" width="31" height="21" fill="#dedede"/><rect x="1" y="581" width="32" height="1" fill="#a4a4a4"/><text x="17" y="576" font-size="12" fill="#111" text-anchor="middle" textLength="18" lengthAdjust="spacingAndGlyphs" stroke="#111" stroke-width="0.2">296</text><rect x="2" y="582" width="31" height="21" fill="#dedede"/><rect x="1" y="603" width="32" height="1" fill="#a4a4a4"/><text x="17" y="598" font-size="12" fill="#111" text-anchor="middle" textLength="18" lengthAdjust="spacingAndGlyphs" stroke="#111" stroke-width="0.2">297</text><rect x="2" y="604" width="31" height="21" fill="#dedede"/><rect x="1" y="625" width="32" height="1" fill="#a4a4a4"/><text x="17" y="620" font-size="12" fill="#111" text-anchor="middle" textLength="18" lengthAdjust="spacingAndGlyphs" stroke="#111" stroke-width="0.2">298</text><rect x="2" y="626" width="31" height="21" fill="#dedede"/><rect x="1" y="647" width="32" height="1" fill="#a4a4a4"/><text x="17" y="642" font-size="12" fill="#111" text-anchor="middle" textLength="18" lengthAdjust="spacingAndGlyphs" stroke="#111" stroke-width="0.2">299</text><rect x="2" y="648" width="31" height="21" fill="#dedede"/><rect x="1" y="669" width="32" height="1" fill="#a4a4a4"/><text x="17" y="664" font-size="12" fill="#111" text-anchor="middle" textLength="18" lengthAdjust="spacingAndGlyphs" stroke="#111" stroke-width="0.2">300</text><rect x="2" y="670" width="31" height="21" fill="#dedede"/><rect x="1" y="691" width="32" height="1" fill="#a4a4a4"/><text x="17" y="686" font-size="12" fill="#111" text-anchor="middle" textLength="18" lengthAdjust="spacingAndGlyphs" stroke="#111" stroke-width="0.2">301</text><rect x="2" y="692" width="31" height="21" fill="#dedede"/><rect x="1" y="713" width="32" height="1" fill="#a4a4a4"/><text x="17" y="708" font-size="12" fill="#111" text-anchor="middle" textLength="18" lengthAdjust="spacingAndGlyphs" stroke="#111" stroke-width="0.2">302</text><rect x="2" y="714" width="31" height="21" fill="#dedede"/><rect x="1" y="735" width="32" height="1" fill="#a4a4a4"/><text x="17" y="730" font-size="12" fill="#111" text-anchor="middle" textLength="18" lengthAdjust="spacingAndGlyphs" stroke="#111" stroke-width="0.2">303</text><rect x="2" y="736" width="31" height="21" fill="#dedede"/><rect x="1" y="757" width="32" height="1" fill="#a4a4a4"/><text x="17" y="752" font-size="12" fill="#111" text-anchor="middle" textLength="18" lengthAdjust="spacingAndGlyphs" stroke="#111" stroke-width="0.2">304</text><rect x="2" y="758" width="31" height="21" fill="#dedede"/><rect x="1" y="779" width="32" height="1" fill="#a4a4a4"/><text x="17" y="774" font-size="12" fill="#111" text-anchor="middle" textLength="18" lengthAdjust="spacingAndGlyphs" stroke="#111" stroke-width="0.2">305</text><rect x="2" y="780" width="31" height="21" fill="#dedede"/><rect x="1" y="801" width="32" height="1" fill="#a4a4a4"/><text x="17" y="796" font-size="12" fill="#111" text-anchor="middle" textLength="18" lengthAdjust="spacingAndGlyphs" stroke="#111" stroke-width="0.2">306</text><rect x="34" y="186" width="830" height="800" fill="#fff"/><rect x="34" y="207" width="796" height="1" fill="#c9c9c9"/><rect x="34" y="229" width="796" height="1" fill="#c9c9c9"/><rect x="34" y="251" width="796" height="1" fill="#c9c9c9"/><rect x="34" y="273" width="796" height="1" fill="#c9c9c9"/><rect x="34" y="295" width="796" height="1" fill="#c9c9c9"/><rect x="34" y="317" width="796" height="1" fill="#c9c9c9"/><rect x="34" y="339" width="796" height="1" fill="#c9c9c9"/><rect x="34" y="361" width="796" height="1" fill="#c9c9c9"/><rect x="34" y="383" width="796" height="1" fill="#c9c9c9"/><rect x="34" y="405" width="796" height="1" fill="#c9c9c9"/><rect x="34" y="427" width="796" height="1" fill="#c9c9c9"/><rect x="34" y="449" width="796" height="1" fill="#c9c9c9"/><rect x="34" y="471" width="796" height="1" fill="#c9c9c9"/><rect x="34" y="493" width="796" height="1" fill="#c9c9c9"/><rect x="34" y="515" width="796" height="1" fill="#c9c9c9"/><rect x="34" y="537" width="796" height="1" fill="#c9c9c9"/><rect x="34" y="559" width="796" height="1" fill="#c9c9c9"/><rect x="34" y="581" width="796" height="1" fill="#c9c9c9"/><rect x="34" y="603" width="796" height="1" fill="#c9c9c9"/><rect x="34" y="625" width="796" height="1" fill="#c9c9c9"/><rect x="34" y="647" width="796" height="1" fill="#c9c9c9"/><rect x="34" y="669" width="796" height="1" fill="#c9c9c9"/><rect x="34" y="691" width="796" height="1" fill="#c9c9c9"/><rect x="34" y="713" width="796" height="1" fill="#c9c9c9"/><rect x="34" y="735" width="796" height="1" fill="#c9c9c9"/><rect x="34" y="757" width="796" height="1" fill="#c9c9c9"/><rect x="34" y="779" width="796" height="1" fill="#c9c9c9"/><rect x="34" y="801" width="796" height="1" fill="#c9c9c9"/><rect x="130" y="186" width="1" height="614" fill="#c9c9c9"/><rect x="209" y="186" width="1" height="614" fill="#c9c9c9"/><rect x="312" y="186" width="1" height="614" fill="#c9c9c9"/><rect x="420" y="186" width="1" height="614" fill="#c9c9c9"/><rect x="34" y="339" width="279" height="353" fill="#ffff00"/><text x="35.0" y="203" font-size="17" fill="#000">29.12.2025</text><text x="132.1" y="203" font-size="17" fill="#000">13:08:00</text><text x="310.8" y="203" font-size="17" fill="#000" text-anchor="end">1565,57</text><text x="35.0" y="225" font-size="17" fill="#000">29.12.2025</text><text x="132.1" y="225" font-size="17" fill="#000">13:09:00</text><text x="310.8" y="225" font-size="17" fill="#000" text-anchor="end">1565,57</text><text x="35.0" y="247" font-size="17" fill="#000">29.12.2025</text><text x="132.1" y="247" font-size="17" fill="#000">13:10:00</text><text x="310.8" y="247" font-size="17" fill="#000" text-anchor="end">1565,57</text><text x="35.0" y="269" font-size="17" fill="#000">29.12.2025</text><text x="132.1" y="269" font-size="17" fill="#000">13:11:00</text><text x="310.8" y="269" font-size="17" fill="#000" text-anchor="end">1565,57</text><text x="35.0" y="291" font-size="17" fill="#000">29.12.2025</text><text x="132.1" y="291" font-size="17" fill="#000">13:12:00</text><text x="310.8" y="291" font-size="17" fill="#000" text-anchor="end">1565,57</text><text x="35.0" y="313" font-size="17" fill="#000">29.12.2025</text><text x="132.1" y="313" font-size="17" fill="#000">13:13:00</text><text x="310.8" y="313" font-size="17" fill="#000" text-anchor="end">1565,57</text><text x="35.0" y="335" font-size="17" fill="#000">29.12.2025</text><text x="132.1" y="335" font-size="17" fill="#000">13:14:00</text><text x="310.8" y="335" font-size="17" fill="#000" text-anchor="end">1565,57</text><text x="35.0" y="357" font-size="17" fill="#000">29.12.2025</text><text x="132.1" y="357" font-size="17" fill="#000">13:15:00</text><text x="310.8" y="357" font-size="17" fill="#000" text-anchor="end">1565,57</text><text x="35.0" y="379" font-size="17" fill="#000">29.12.2025</text><text x="132.1" y="379" font-size="17" fill="#000">13:16:00</text><text x="310.8" y="379" font-size="17" fill="#000" text-anchor="end">1565,57</text><text x="35.0" y="401" font-size="17" fill="#000">29.12.2025</text><text x="132.1" y="401" font-size="17" fill="#000">13:17:00</text><text x="310.8" y="401" font-size="17" fill="#000" text-anchor="end">1565,57</text><text x="35.0" y="423" font-size="17" fill="#000">29.12.2025</text><text x="132.1" y="423" font-size="17" fill="#000">13:18:00</text><text x="310.8" y="423" font-size="17" fill="#000" text-anchor="end">1565,57</text><text x="35.0" y="445" font-size="17" fill="#000">29.12.2025</text><text x="132.1" y="445" font-size="17" fill="#000">13:19:00</text><text x="310.8" y="445" font-size="17" fill="#000" text-anchor="end">1565,57</text><text x="35.0" y="467" font-size="17" fill="#000">29.12.2025</text><text x="132.1" y="467" font-size="17" fill="#000">13:20:00</text><text x="310.8" y="467" font-size="17" fill="#000" text-anchor="end">1565,57</text><text x="35.0" y="489" font-size="17" fill="#000">29.12.2025</text><text x="132.1" y="489" font-size="17" fill="#000">13:21:00</text><text x="310.8" y="489" font-size="17" fill="#000" text-anchor="end">1565,57</text><text x="35.0" y="511" font-size="17" fill="#000">29.12.2025</text><text x="132.1" y="511" font-size="17" fill="#000">13:22:00</text><text x="310.8" y="511" font-size="17" fill="#000" text-anchor="end">1565,57</text><text x="35.0" y="533" font-size="17" fill="#000">29.12.2025</text><text x="132.1" y="533" font-size="17" fill="#000">13:23:00</text><text x="310.8" y="533" font-size="17" fill="#000" text-anchor="end">1565,57</text><text x="35.0" y="555" font-size="17" fill="#000">29.12.2025</text><text x="132.1" y="555" font-size="17" fill="#000">13:24:00</text><text x="310.8" y="555" font-size="17" fill="#000" text-anchor="end">1565,57</text><text x="35.0" y="577" font-size="17" fill="#000">29.12.2025</text><text x="132.1" y="577" font-size="17" fill="#000">13:25:00</text><text x="310.8" y="577" font-size="17" fill="#000" text-anchor="end">1565,57</text><text x="35.0" y="599" font-size="17" fill="#000">29.12.2025</text><text x="132.1" y="599" font-size="17" fill="#000">13:26:00</text><text x="310.8" y="599" font-size="17" fill="#000" text-anchor="end">1565,57</text><text x="35.0" y="621" font-size="17" fill="#000">29.12.2025</text><text x="132.1" y="621" font-size="17" fill="#000">13:27:00</text><text x="310.8" y="621" font-size="17" fill="#000" text-anchor="end">1565,57</text><text x="35.0" y="643" font-size="17" fill="#000">29.12.2025</text><text x="132.1" y="643" font-size="17" fill="#000">13:28:00</text><text x="310.8" y="643" font-size="17" fill="#000" text-anchor="end">1565,57</text><text x="35.0" y="665" font-size="17" fill="#000">29.12.2025</text><text x="132.1" y="665" font-size="17" fill="#000">13:29:00</text><text x="310.8" y="665" font-size="17" fill="#000" text-anchor="end">1565,57</text><text x="35.0" y="687" font-size="17" fill="#000">29.12.2025</text><text x="132.1" y="687" font-size="17" fill="#000">13:30:00</text><text x="310.8" y="687" font-size="17" fill="#000" text-anchor="end">1565,57</text><text x="35.0" y="709" font-size="17" fill="#000">29.12.2025</text><text x="132.1" y="709" font-size="17" fill="#000">13:31:00</text><text x="310.8" y="709" font-size="17" fill="#000" text-anchor="end">1565,57</text><text x="35.0" y="731" font-size="17" fill="#000">29.12.2025</text><text x="132.1" y="731" font-size="17" fill="#000">13:32:00</text><text x="310.8" y="731" font-size="17" fill="#000" text-anchor="end">1565,57</text><text x="35.0" y="753" font-size="17" fill="#000">29.12.2025</text><text x="132.1" y="753" font-size="17" fill="#000">13:33:00</text><text x="310.8" y="753" font-size="17" fill="#000" text-anchor="end">1565,57</text><text x="35.0" y="775" font-size="17" fill="#000">29.12.2025</text><text x="132.1" y="775" font-size="17" fill="#000">13:34:00</text><text x="310.8" y="775" font-size="17" fill="#000" text-anchor="end">1565,57</text><text x="35.0" y="797" font-size="17" fill="#000">29.12.2025</text><text x="132.1" y="797" font-size="17" fill="#000">13:35:00</text><text x="310.8" y="797" font-size="17" fill="#000" text-anchor="end">1565,57</text></svg></div>
</body></html>
